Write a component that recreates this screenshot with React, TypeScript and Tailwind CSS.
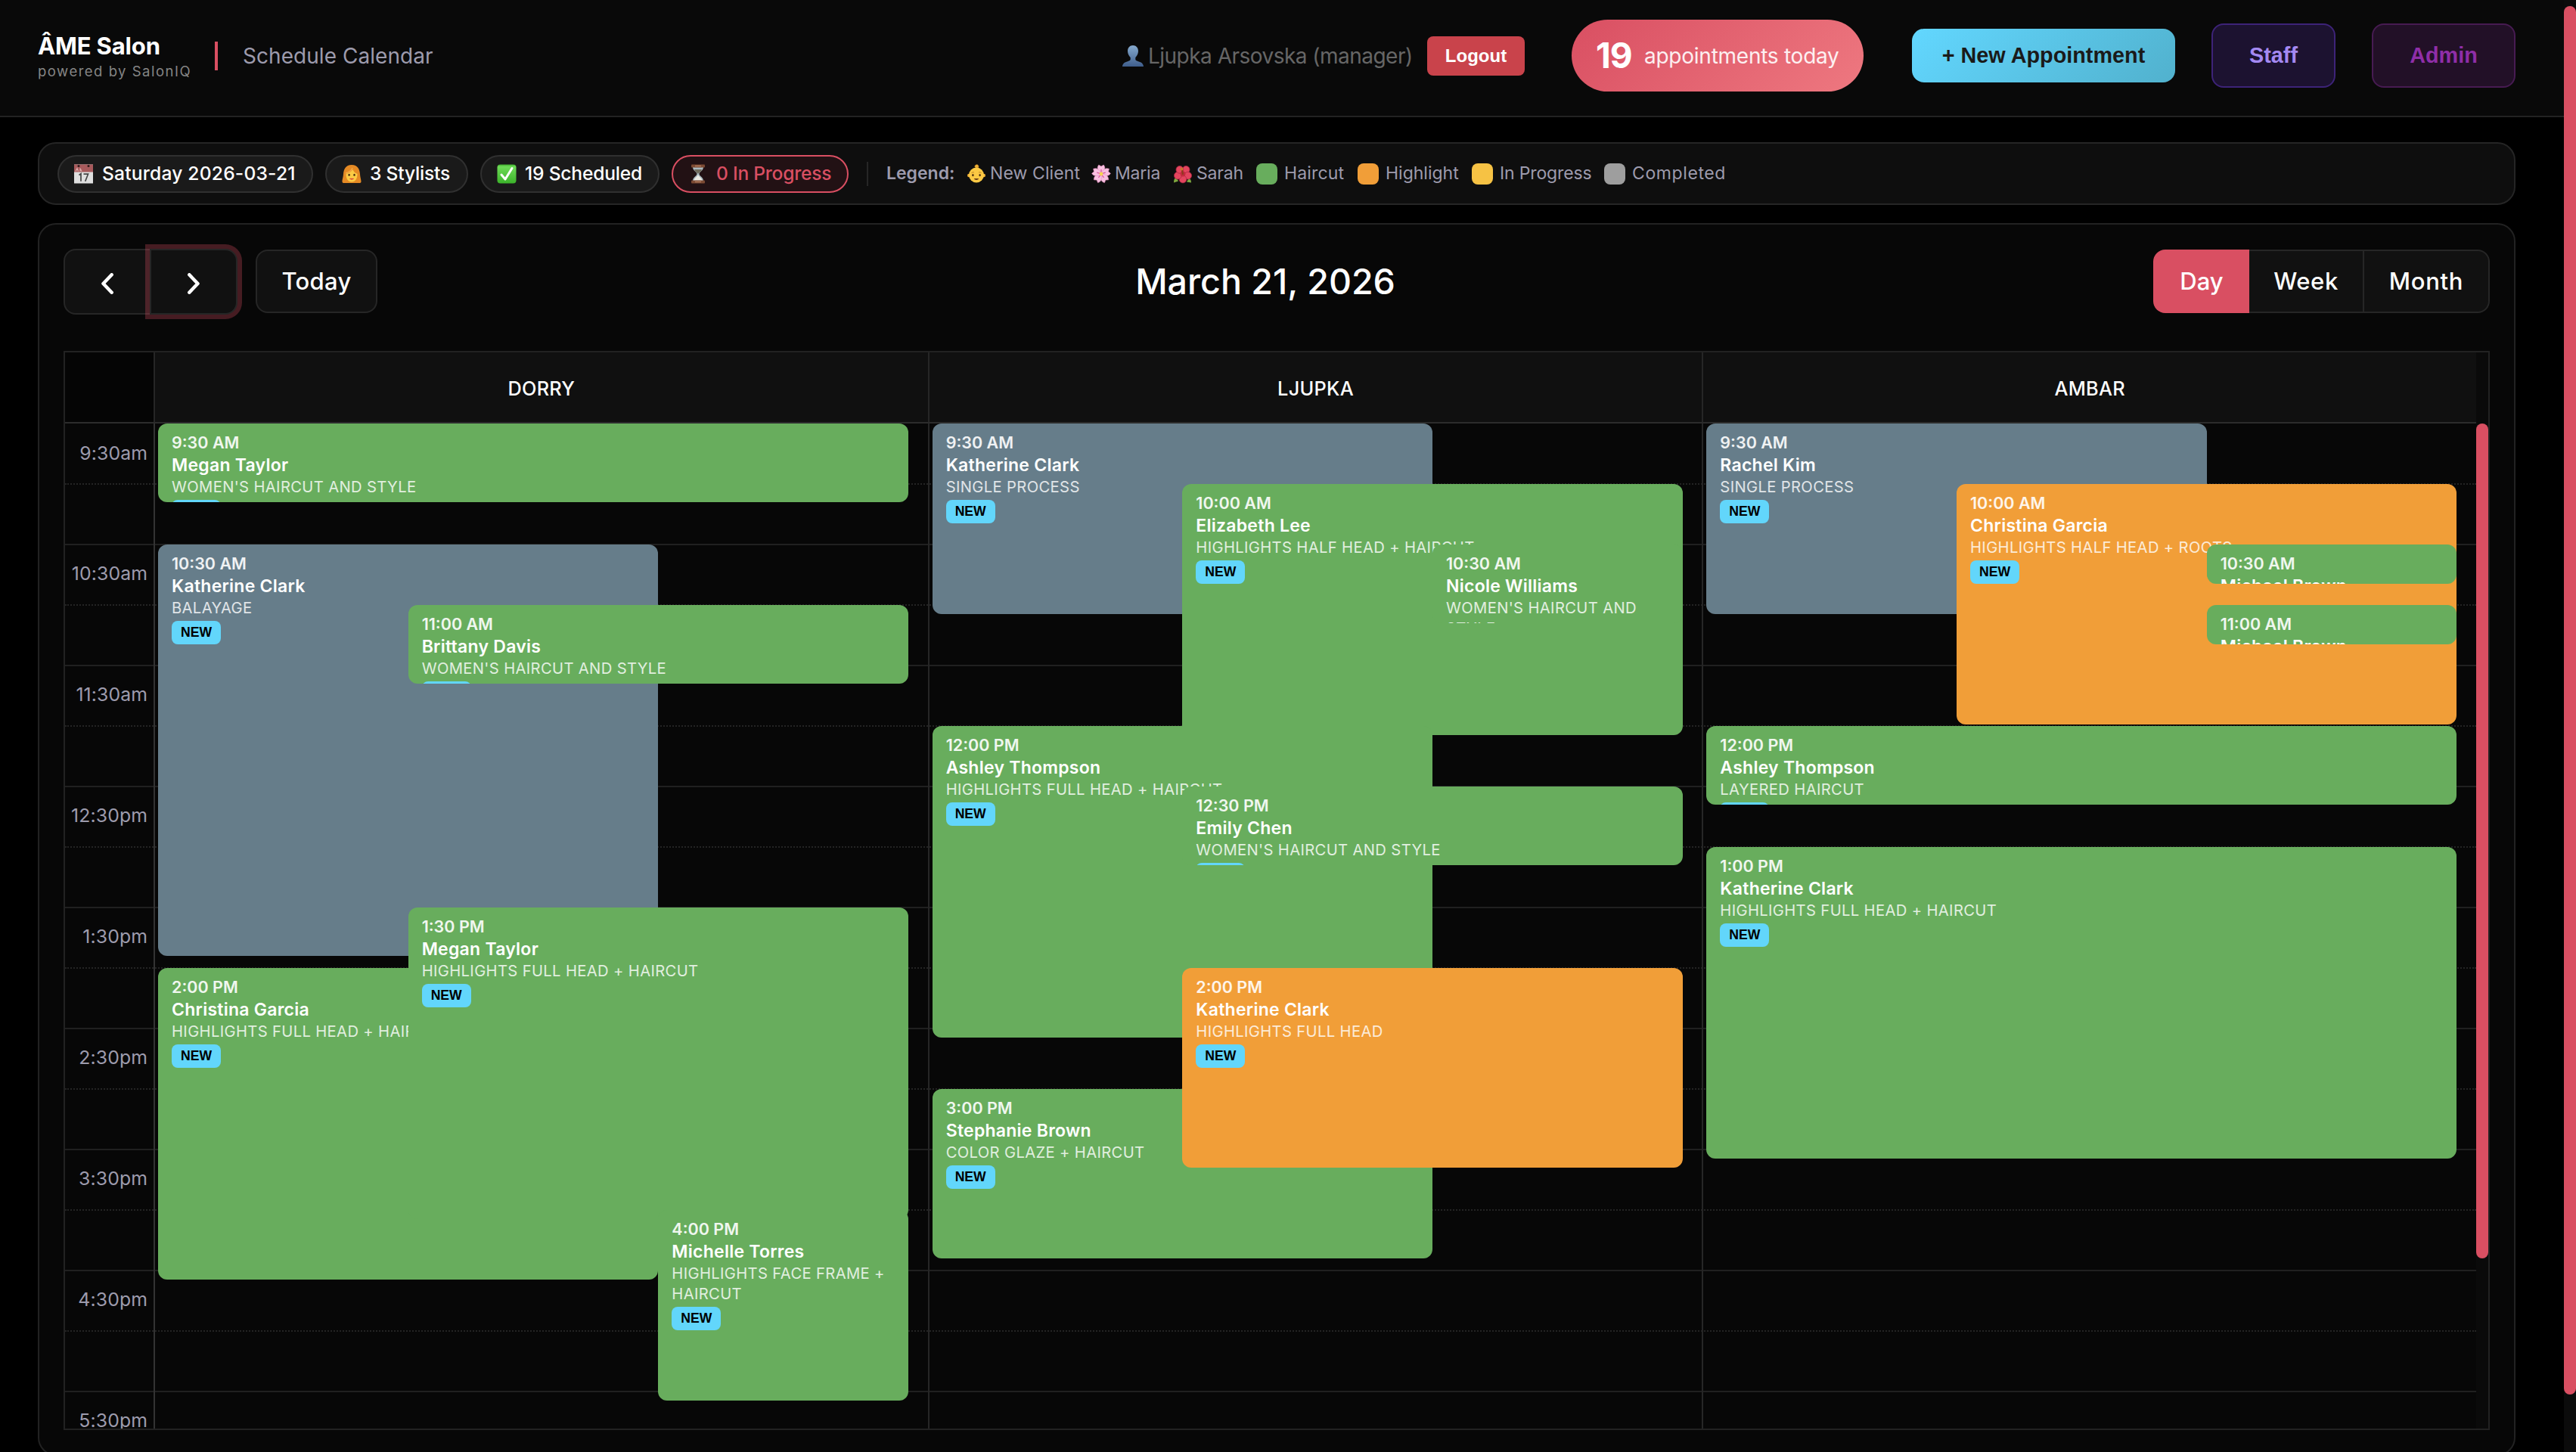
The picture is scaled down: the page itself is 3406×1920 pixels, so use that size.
import type { ReactNode } from 'react'

type Tone = 'green' | 'orange' | 'slate'

interface Appointment {
    time: string
    client: string
    service: string
    tone: Tone
    top: number
    height: number
    /* thirds of the column the card starts and ends on */
    from: number
    to: number
}

const TONES: Record<Tone, string> = {
    green: 'bg-[#68ad5d]',
    orange: 'bg-[#f19e38]',
    slate: 'bg-[#667d8a]',
}

const STYLISTS: { name: string; items: Appointment[] }[] = [
    {
        name: 'DORRY',
        items: [
            { time: '9:30 AM', client: 'Megan Taylor', service: "WOMEN'S HAIRCUT AND STYLE", tone: 'green', top: 0, height: 104, from: 0, to: 3 },
            { time: '10:30 AM', client: 'Katherine Clark', service: 'BALAYAGE', tone: 'slate', top: 160, height: 544, from: 0, to: 2 },
            { time: '11:00 AM', client: 'Brittany Davis', service: "WOMEN'S HAIRCUT AND STYLE", tone: 'green', top: 240, height: 104, from: 1, to: 3 },
            { time: '2:00 PM', client: 'Christina Garcia', service: 'HIGHLIGHTS FULL HEAD + HAIRCUT', tone: 'green', top: 720, height: 412, from: 0, to: 2 },
            { time: '1:30 PM', client: 'Megan Taylor', service: 'HIGHLIGHTS FULL HEAD + HAIRCUT', tone: 'green', top: 640, height: 412, from: 1, to: 3 },
            { time: '4:00 PM', client: 'Michelle Torres', service: 'HIGHLIGHTS FACE FRAME + HAIRCUT', tone: 'green', top: 1040, height: 252, from: 2, to: 3 },
        ],
    },
    {
        name: 'LJUPKA',
        items: [
            { time: '9:30 AM', client: 'Katherine Clark', service: 'SINGLE PROCESS', tone: 'slate', top: 0, height: 252, from: 0, to: 2 },
            { time: '10:00 AM', client: 'Elizabeth Lee', service: 'HIGHLIGHTS HALF HEAD + HAIRCUT', tone: 'green', top: 80, height: 332, from: 1, to: 3 },
            { time: '10:30 AM', client: 'Nicole Williams', service: "WOMEN'S HAIRCUT AND STYLE", tone: 'green', top: 160, height: 104, from: 2, to: 3 },
            { time: '12:00 PM', client: 'Ashley Thompson', service: 'HIGHLIGHTS FULL HEAD + HAIRCUT', tone: 'green', top: 400, height: 412, from: 0, to: 2 },
            { time: '12:30 PM', client: 'Emily Chen', service: "WOMEN'S HAIRCUT AND STYLE", tone: 'green', top: 480, height: 104, from: 1, to: 3 },
            { time: '3:00 PM', client: 'Stephanie Brown', service: 'COLOR GLAZE + HAIRCUT', tone: 'green', top: 880, height: 224, from: 0, to: 2 },
            { time: '2:00 PM', client: 'Katherine Clark', service: 'HIGHLIGHTS FULL HEAD', tone: 'orange', top: 720, height: 264, from: 1, to: 3 },
        ],
    },
    {
        name: 'AMBAR',
        items: [
            { time: '9:30 AM', client: 'Rachel Kim', service: 'SINGLE PROCESS', tone: 'slate', top: 0, height: 252, from: 0, to: 2 },
            { time: '10:00 AM', client: 'Christina Garcia', service: 'HIGHLIGHTS HALF HEAD + ROOTS', tone: 'orange', top: 80, height: 318, from: 1, to: 3 },
            { time: '10:30 AM', client: 'Michael Brown', service: '', tone: 'green', top: 160, height: 52, from: 2, to: 3 },
            { time: '11:00 AM', client: 'Michael Brown', service: '', tone: 'green', top: 240, height: 52, from: 2, to: 3 },
            { time: '12:00 PM', client: 'Ashley Thompson', service: 'LAYERED HAIRCUT', tone: 'green', top: 400, height: 104, from: 0, to: 3 },
            { time: '1:00 PM', client: 'Katherine Clark', service: 'HIGHLIGHTS FULL HEAD + HAIRCUT', tone: 'green', top: 560, height: 412, from: 0, to: 3 },
        ],
    },
]

const HOURS = ['9:30am', '10:30am', '11:30am', '12:30pm', '1:30pm', '2:30pm', '3:30pm', '4:30pm', '5:30pm']

function UserIcon() {
    return (
        <svg width="28" height="28" viewBox="0 0 28 28">
            <defs>
                <linearGradient id="user" x1="0" y1="0" x2="0" y2="1">
                    <stop offset="0" stopColor="#86aace" />
                    <stop offset="1" stopColor="#3f5e8c" />
                </linearGradient>
            </defs>
            <path fill="url(#user)" d="M14 0c4.300 0 7 3.200 7 7.600 0 3.600-1.600 6.600-3.700 8.300v2.300c0 1.500 1 2.100 3.700 3 4.200 1.300 6.600 2.600 7 6.800H0c.4-4.200 2.800-5.500 7-6.800 2.700-.9 3.700-1.500 3.700-3v-2.300C8.600 14.200 7 11.200 7 7.600 7 3.200 9.700 0 14 0z" />
        </svg>
    )
}

function CalendarIcon() {
    return (
        <svg width="26" height="26" viewBox="0 0 26 26">
            <rect y="0.500" width="25" height="25" fill="#dfdfdf" />
            <rect y="0.500" width="25" height="10" fill="#a85a5c" />
            <path d="M2 9.500l2-4 1.500 4M8 9.500v-4l2 4" stroke="#d9a9aa" strokeWidth="1.200" fill="none" />
            <circle cx="6" cy="2.600" r="1.500" fill="#2c1a1a" />
            <circle cx="19" cy="2.600" r="1.500" fill="#2c1a1a" />
            <path d="M6.500 14.500l2.500-1.800v10M12.500 13.200h6l-3.800 9.500" stroke="#444" strokeWidth="1.700" fill="none" />
        </svg>
    )
}

function WomanIcon() {
    return (
        <svg width="26" height="26" viewBox="0 0 26 26">
            <path d="M13 1C5 1 2.500 7 2 13c-.3 5-1.500 7-1.500 10 0 1.500.8 2 2.500 2h20c1.700 0 2.500-.5 2.500-2 0-3-1.200-5-1.500-10C23.500 7 21 1 13 1z" fill="#e58a24" />
            <path d="M5.500 13c4-1.200 7-3 9-6 1 3 3 5 6 6 0 6-2.500 10.500-7.500 10.500S5.500 19 5.500 13z" fill="#fbcb45" />
            <ellipse cx="9.600" cy="14.200" rx="1.200" ry="1.500" fill="#4a2d10" />
            <ellipse cx="16.500" cy="14.200" rx="1.200" ry="1.500" fill="#4a2d10" />
            <path d="M10.500 19.300q2.600 2 5 0z" fill="#d8413a" stroke="#d8413a" strokeWidth="0.800" />
            <path d="M5 12c4-1 8-4 9-7" stroke="#f6ab4a" strokeWidth="1.300" fill="none" />
        </svg>
    )
}

function CheckIcon() {
    return (
        <svg width="26" height="26" viewBox="0 0 26 26">
            <defs>
                <linearGradient id="check" x1="0" y1="0" x2="0" y2="1">
                    <stop offset="0" stopColor="#3fae2c" />
                    <stop offset="0.120" stopColor="#6edb57" />
                    <stop offset="1" stopColor="#3bb32a" />
                </linearGradient>
            </defs>
            <rect x="0.500" y="0.500" width="25" height="25" rx="4" fill="url(#check)" />
            <path d="M6 14l5 6L20 5.500" fill="none" stroke="#fff" strokeWidth="3" strokeLinecap="round" strokeLinejoin="round" />
        </svg>
    )
}

function HourglassIcon() {
    return (
        <svg width="26" height="26" viewBox="0 0 26 26">
            <path d="M6 4c0 5 5.500 6 5.500 9S6 17 6 22h14c0-5-5.500-6-5.500-9S20 9 20 4z" fill="#a9b8bf" />
            <path d="M8 7c1 3.500 4 4 5 6 1-2 4-2.500 5-6z" fill="#6f6a5c" />
            <path d="M13 14c-1 3-5 4-5.500 8h11c-.5-4-4.500-5-5.500-8z" fill="#ece9e2" />
            <rect x="4" y="0.500" width="18" height="4" rx="1" fill="#7c4a33" />
            <rect x="4" y="21.500" width="18" height="4" rx="1" fill="#7c4a33" />
            <path d="M9 2.500h8M9 23.500h8" stroke="#c08a6b" strokeWidth="1.200" />
        </svg>
    )
}

function BabyIcon() {
    return (
        <svg width="26" height="26" viewBox="0 0 26 26">
            <path d="M13 4c0-1.500 1.500-1.600 1.500-.4 0 1-1 1.400-2.500 1C10.500 3.500 11 1.500 13 1c2.500-.3 3.500 2 2 4" fill="#f5b83a" stroke="#eaa62e" strokeWidth="1" />
            <circle cx="3.200" cy="15" r="2.200" fill="#f2b237" />
            <circle cx="22.800" cy="15" r="2.200" fill="#f2b237" />
            <circle cx="13" cy="14.500" r="10" fill="#fbc944" />
            <ellipse cx="8.400" cy="14.600" rx="1.200" ry="1.600" fill="#4a2d10" />
            <ellipse cx="17.600" cy="14.600" rx="1.200" ry="1.600" fill="#4a2d10" />
            <path d="M6.500 11.500q1.800-1.200 3.400-.5M16 11q1.800-.7 3.500.5" stroke="#b87a1e" strokeWidth="0.900" fill="none" />
            <path d="M10.400 19.600q2.600 2 5.200 0z" fill="#5d3415" stroke="#5d3415" strokeWidth="0.900" />
        </svg>
    )
}

function BlossomIcon() {
    return (
        <svg width="26" height="26" viewBox="0 0 26 26">
            {[0, 72, 144, 216, 288].map((a) => (
                <g key={a} transform={`rotate(${a} 13 13)`}>
                    <path d="M13 13C8 9.500 6.800 4.500 9.800 1L13 3l3.200-2C19.200 4.500 18 9.500 13 13z" fill="#f8bfe0" stroke="#e58cc0" strokeWidth="0.500" />
                    <path d="M13 12V7" stroke="#d8579c" strokeWidth="1.200" />
                </g>
            ))}
            <circle cx="13" cy="13" r="2.400" fill="#f7d552" />
        </svg>
    )
}

function HibiscusIcon() {
    return (
        <svg width="26" height="26" viewBox="0 0 26 26">
            <path d="M1 24.500c0-4 1-6 3-7l3 5zM24 24.500c0-3-1-5-3-6l-3 5z" fill="#7fa83f" />
            {[0, 72, 144, 216, 288].map((a) => (
                <circle key={a} cx="13" cy="6" r="4.900" fill="#e4455f" stroke="#a82640" strokeWidth="0.700" transform={`rotate(${a + 36} 13 13)`} />
            ))}
            <circle cx="13" cy="13" r="3.400" fill="#c22a3e" />
            <path d="M13 13l-1.500-6.500" stroke="#8d3b1d" strokeWidth="2" strokeLinecap="round" />
            <circle cx="11.500" cy="6.500" r="2" fill="#c9762c" />
        </svg>
    )
}

function Chevron({ flip = false }: { flip?: boolean }) {
    return (
        <svg width="16" height="28" viewBox="0 0 16 28" className={flip ? 'mt-[5px] -scale-x-100' : 'mt-[5px]'}>
            <path d="M13.700 2.300L2.500 14l11.200 11.700" fill="none" stroke="#fff" strokeWidth="4.500" strokeLinecap="round" strokeLinejoin="round" />
        </svg>
    )
}

function Header() {
    return (
        <header className="h-[155px] pt-[26px] pl-[50px] pr-16 border-b-2 border-[#232323] bg-[#090909]">
            <div className="h-[95px] flex items-center">
                <div className="w-[234px] h-16 shrink-0">
                    <div className="h-[38px] leading-[38px] text-[31px] font-bold tracking-[-0.15px] text-white">ÂME Salon</div>
                    <div className="h-7 leading-7 text-[18.5px] tracking-[1.5px] text-[#858585]">powered by SalonIQ</div>
                </div>
                <div className="w-1 h-[38px] bg-[#d94f62]" />
                <div className="ml-[33px] text-[28px] tracking-[0.05px] text-[#9d9bad]">Schedule Calendar</div>

                <div className="ml-auto flex items-center whitespace-nowrap">
                    <UserIcon />
                    <span className="w-[371px] pl-[6px] text-[28px] tracking-[-0.52px] text-[#666]">Ljupka Arsovska (manager)</span>
                    <button className="w-[129px] h-[52px] ml-1 mr-[62px] mt-px rounded-lg bg-[#c9434b] font-['Liberation_Sans',sans-serif] text-2xl font-bold text-white">Logout</button>
                    <div className="w-[386px] h-[95px] mr-16 pl-8 flex items-center rounded-full bg-[linear-gradient(135deg,#d94f62,#ee7880)]">
                        <span className="w-16 text-[46px] font-bold tracking-[-1px] text-white">19</span>
                        <span className="text-[28px] tracking-[-0.25px] text-white/90">appointments today</span>
                    </div>
                    <button className="w-[348px] h-[71px] mr-12 rounded-2xl bg-[linear-gradient(135deg,#62d7ff,#51b1cd)] font-['Liberation_Sans',sans-serif] text-[28.8px] font-bold text-[#1a1a1a]">+ New Appointment</button>
                    <button className="w-[164px] h-[85px] mr-12 rounded-2xl border-2 border-[#3d2378] bg-[#1c1230] font-['Liberation_Sans',sans-serif] text-[28.8px] font-bold text-[#a489f2]">Staff</button>
                    <button className="w-[190px] h-[85px] rounded-2xl border-2 border-[#471b52] bg-[#221027] font-['Liberation_Sans',sans-serif] text-[28.8px] font-bold text-[#8f2ea8]">Admin</button>
                </div>
            </div>
        </header>
    )
}

function Pill({ className, icon, children }: { className: string; icon: ReactNode; children: ReactNode }) {
    return (
        <div className={`h-[50px] pl-5 flex items-center gap-[11px] rounded-full border-2 text-[24.6px] font-medium ${className}`}>
            {icon}
            <span>{children}</span>
        </div>
    )
}

function InfoBar() {
    return (
        <section className="h-[83px] mt-[33px] px-6 flex items-center whitespace-nowrap rounded-3xl border-2 border-[#252525] bg-[#0e0e0e]">
            <div className="flex gap-4">
                <Pill className="w-[338px] border-[#303030] bg-[#1a1a1a] text-white tracking-[0.2px]" icon={<CalendarIcon />}>Saturday 2026-03-21</Pill>
                <Pill className="w-[189px] border-[#303030] bg-[#1a1a1a] text-white tracking-[-0.2px]" icon={<WomanIcon />}>3 Stylists</Pill>
                <Pill className="w-[237px] border-[#303030] bg-[#1a1a1a] text-white tracking-[-0.2px]" icon={<CheckIcon />}>19 Scheduled</Pill>
                <Pill className="w-[234px] border-[#d94f62] bg-[#221114] text-[#d94f62] tracking-[-0.25px]" icon={<HourglassIcon />}>0 In Progress</Pill>
            </div>
            <div className="w-0.5 h-8 ml-6 mr-6 bg-[#262626]" />
            <div className="flex items-center text-[23px] text-[#9d9bad]">
                <span className="w-[106px] font-semibold">Legend:</span>
                <span className="w-[165px] flex items-center gap-[5px] tracking-[0.1px]"><BabyIcon />New Client</span>
                <span className="w-[108px] flex items-center gap-[5px] tracking-[-0.2px]"><BlossomIcon />Maria</span>
                <span className="w-[110px] flex items-center gap-[5px] tracking-[-0.2px]"><HibiscusIcon />Sarah</span>
                <span className="w-[134px] flex items-center gap-[9px] tracking-[0.15px]"><i className="size-7 rounded-lg bg-[#68ad5d]" />Haircut</span>
                <span className="w-[151px] flex items-center gap-[9px]"><i className="size-7 rounded-lg bg-[#f19e38]" />Highlight</span>
                <span className="w-[175px] flex items-center gap-[9px] tracking-[-0.15px]"><i className="size-7 rounded-lg bg-[#f6c244]" />In Progress</span>
                <span className="flex items-center gap-[9px] tracking-[0.6px]"><i className="size-7 rounded-lg bg-[#9e9e9e]" />Completed</span>
            </div>
        </section>
    )
}

function Toolbar() {
    return (
        <div className="h-[87px] flex items-center justify-between text-[31px] font-medium text-white">
            <div className="flex items-center">
                <button className="w-[116px] h-[87px] flex items-center justify-center rounded-l-2xl border-2 border-[#262626] bg-[#111]"><Chevron /></button>
                <button className="w-[116px] h-[87px] -ml-0.5 flex items-center justify-center rounded-r-2xl border-2 border-[#262626] bg-[#111] shadow-[0_0_0_6px_rgba(217,79,98,0.3)]"><Chevron flip /></button>
                <button className="w-[161px] h-[84px] ml-6 mb-px rounded-2xl border-2 border-[#262626] bg-[#111] tracking-[0.3px]">Today</button>
            </div>
            <h2 className="text-[46.5px]">March 21, 2026</h2>
            <div className="mb-px flex">
                <button className="w-[128px] h-[84px] rounded-l-2xl bg-[#d94f62]">Day</button>
                <button className="w-[152px] h-[84px] -ml-px border-2 border-l-0 border-[#262626] bg-[#111] tracking-[0.6px]">Week</button>
                <button className="w-[168px] h-[84px] -ml-0.5 rounded-r-2xl border-2 border-[#262626] bg-[#111] tracking-[0.7px]">Month</button>
            </div>
        </div>
    )
}

function AppointmentCard({ item }: { item: Appointment }) {
    return (
        <div
            className={`absolute overflow-hidden rounded-xl pt-2.5 pl-[18px] pr-3 ${TONES[item.tone]}`}
            style={{ top: item.top, height: item.height, left: `${(item.from / 3) * 100}%`, width: `${((item.to - item.from) / 3) * 100}%` }}
        >
            <div className="h-[30px] leading-[30px] text-[21.5px] font-semibold text-white/90">{item.time}</div>
            <div className="h-[30px] leading-[31px] text-[23px] font-semibold tracking-[0.25px] text-white">{item.client}</div>
            {item.service && (
                <>
                    <div className="leading-[27px] text-[20.2px] tracking-[0.36px] text-white/80">{item.service}</div>
                    <div className="w-[65px] h-[31px] mt-1 flex items-center justify-center rounded-lg bg-[#62d6fb] font-['Liberation_Sans',sans-serif] text-[17.6px] font-bold text-black">NEW</div>
                </>
            )}
        </div>
    )
}

function Schedule() {
    return (
        <div className="h-[1427px] mt-12 flex border-2 border-[#222]">
            <div className="w-[3188px] flex flex-col">
                <div className="h-[94px] shrink-0 flex border-b-2 border-[#2c2c2c]">
                    <div className="w-[117px] bg-[#050505]" />
                    {STYLISTS.map((s) => (
                        <div key={s.name} className="flex-1 pt-[3px] flex items-center justify-center border-l-2 border-[#262626] bg-[#101010] text-[25.3px] font-medium tracking-[0.3px] text-white">{s.name}</div>
                    ))}
                </div>
                <div className="relative flex-1 overflow-hidden">
                    {HOURS.map((h, i) => (
                        <div key={h}>
                            <div className={`w-full flex items-center border-[#202020] ${i === 0 ? 'h-[79px]' : 'h-20 pb-0.5 border-t-2'}`}>
                                <span className="w-[109px] text-right text-[24.8px] tracking-[0.1px] text-[#9d9bad]">{h}</span>
                            </div>
                            <div className="h-20 border-t-2 border-dotted border-[#242424]" />
                        </div>
                    ))}
                    {/* stylist columns sit over the hour lines */}
                    <div className="absolute inset-y-0 left-[117px] right-0 flex">
                        {STYLISTS.map((s, i) => (
                            <div key={s.name} className={`flex-1 pl-1 border-l-2 ${i === 0 ? 'border-[#333]' : 'border-[#262626]'}`}>
                                <div className="relative w-[992px] h-full">
                                    {s.items.map((item) => <AppointmentCard key={item.time} item={item} />)}
                                </div>
                            </div>
                        ))}
                    </div>
                </div>
            </div>
            <div className="w-4 pt-[94px] bg-[#0a0a0a]">
                <div className="h-[1104px] rounded-full bg-[#d94f62]" />
            </div>
        </div>
    )
}

export default function App() {
    return (
        <div className="w-[3406px] h-[1920px] flex overflow-hidden bg-black font-['Inter',sans-serif]">
            <div className="w-[3390px] shrink-0">
                <Header />
                <main className="pl-[50px] pr-16">
                    <InfoBar />
                    <section className="h-[1630px] mt-6 p-8 rounded-3xl border-2 border-[#222] bg-[#070707]">
                        <Toolbar />
                        <Schedule />
                    </section>
                </main>
            </div>
            <div className="w-4 pt-2 bg-[#0b0b0b]">
                <div className="h-[1836px] rounded-full bg-[#d94f62]" />
            </div>
        </div>
    )
}
